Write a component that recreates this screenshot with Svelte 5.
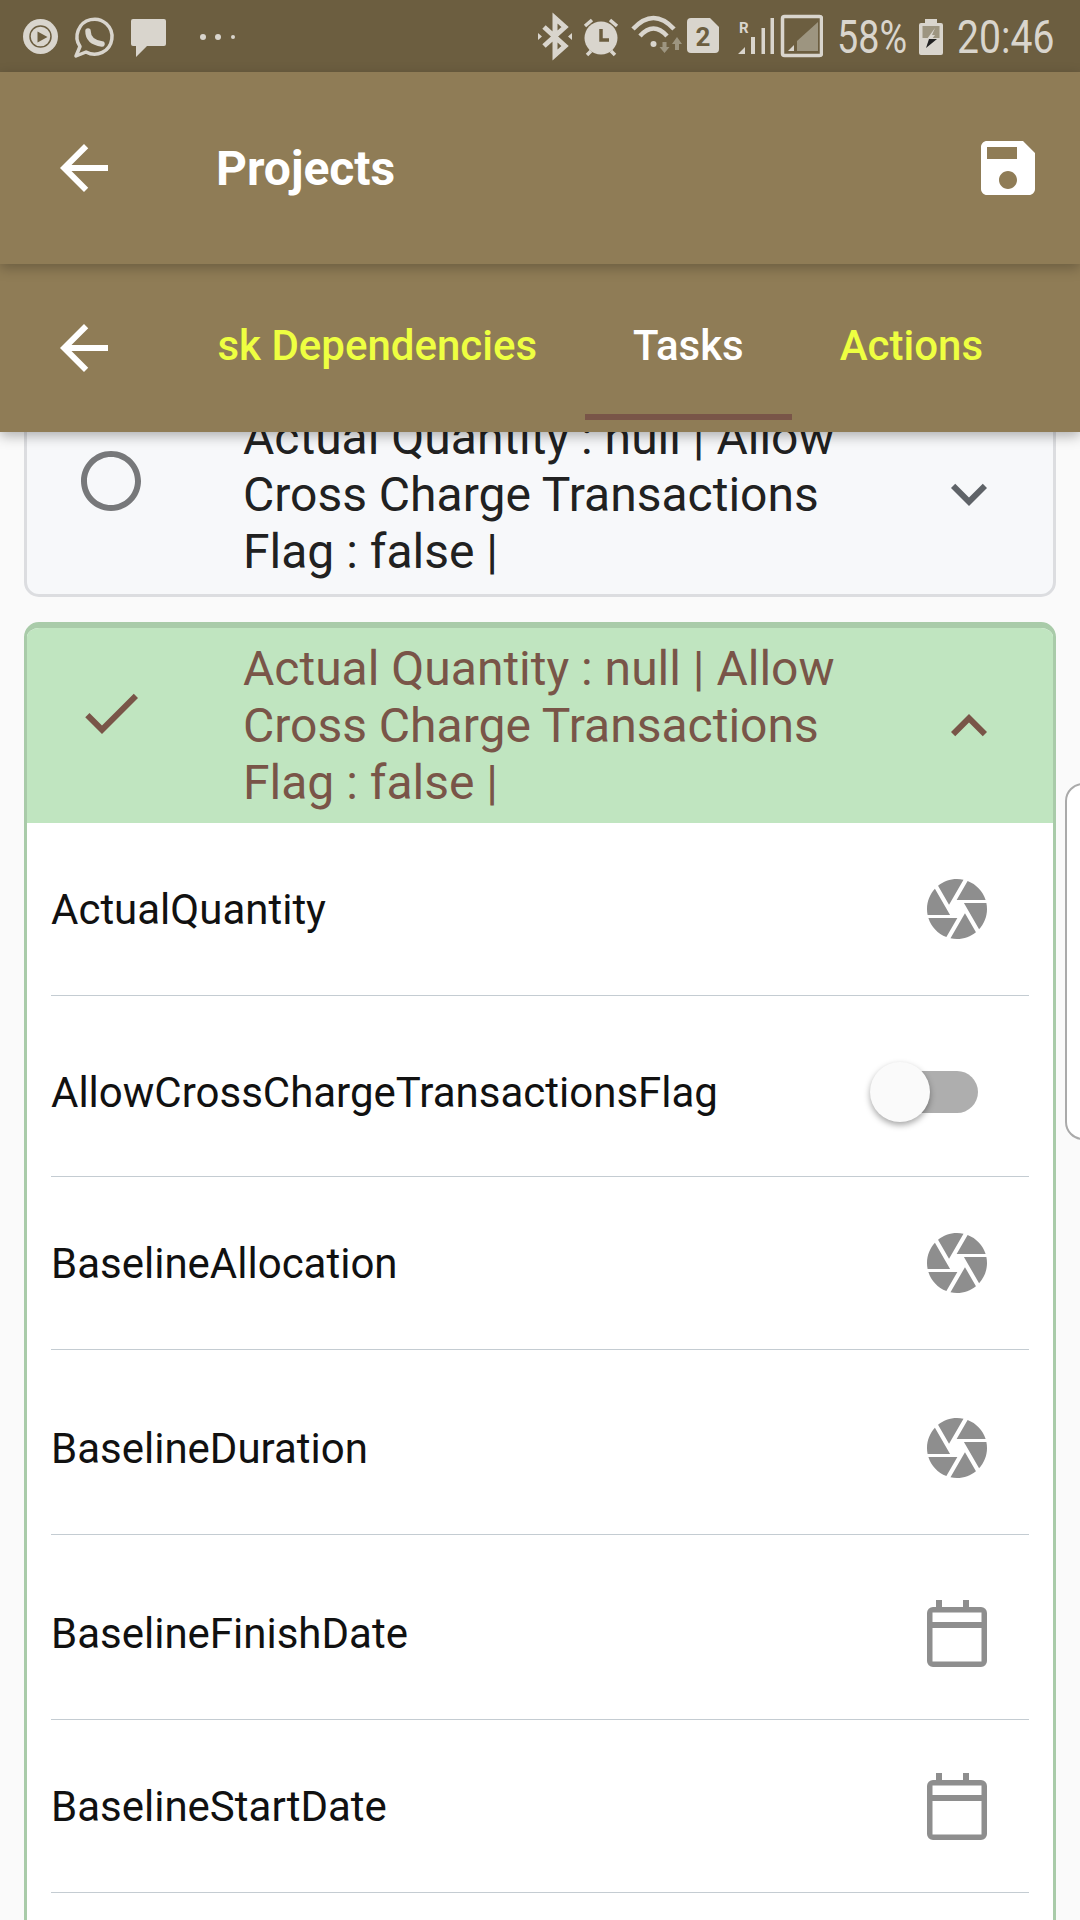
<script>
  const fg = '#d9d5cd';
  const bar = '#6c5e40';
  const dim = '#9d9580';

  const fields = [
    { name: 'ActualQuantity', h: 173, kind: 'camera' },
    { name: 'AllowCrossChargeTransactionsFlag', h: 181, kind: 'toggle', low: true },
    { name: 'BaselineAllocation', h: 173, kind: 'camera' },
    { name: 'BaselineDuration', h: 185, kind: 'camera', low: true },
    { name: 'BaselineFinishDate', h: 185, kind: 'date', low: true },
    { name: 'BaselineStartDate', h: 173, kind: 'date' }
  ];

  const back = 'M20 11H7.83l5.59-5.59L12 4l-8 8 8 8 1.41-1.41L7.83 13H20v-2z';
  const summary = 'Actual Quantity : null | Allow Cross Charge Transactions Flag : false |';
</script>

<div class="screen">
  <header class="top">
    <div class="status">
      <svg class="left-icons" width="212" height="72" viewBox="0 0 212 72">
        <circle cx="17.5" cy="36.5" r="17.5" fill={fg} />
        <circle cx="17.5" cy="36.5" r="10.5" fill="none" stroke={bar} stroke-width="1.5" />
        <path d="M14.5 31.5l10 5.5-10 5.5z" fill={bar} />
        <path d="M53 56L57 46.5A17.5 17.5 0 1 1 63 52Z" fill="none" stroke={fg} stroke-width="3.5" stroke-linejoin="round" />
        <path d="M65 31Q65 42 79 44" fill="none" stroke={fg} stroke-width="5.5" stroke-linecap="round" />
        <path d="M110 19h31a2 2 0 0 1 2 2v23a2 2 0 0 1-2 2h-17l-11 11v-11h-3a2 2 0 0 1-2-2v-23a2 2 0 0 1 2-2z" fill={fg} />
        <circle cx="180" cy="37" r="3" fill={fg} />
        <circle cx="195" cy="37" r="3" fill={fg} />
        <circle cx="210" cy="37" r="2" fill={fg} />
      </svg>

      <div class="right">
        <svg width="285" height="72" viewBox="0 0 285 72">
          <path d="M6 27L27 46L17 55V18L27 27L6 46" fill="none" stroke={fg} stroke-width="5" />
          <path d="M0 33l4 3.500-4 3.500zM34 33l-4 3.500 4 3.500z" fill={fg} />

          <circle cx="63" cy="38" r="16.500" fill={fg} />
          <path d="M63 29V40H71" fill="none" stroke={bar} stroke-width="3.500" />
          <path d="M47 26L54 20M72 20L79 26M49 55L53 51M77 55L73 51" stroke={fg} stroke-width="3.500" />

          <path d="M95 29Q115.500 7 136 29M102 36Q115.500 21 129 36" fill="none" stroke={fg} stroke-width="4.500" />
          <circle cx="115.500" cy="44" r="3" fill={fg} />
          <path d="M124.500 42h4v5h3l-5 6-5-6h3zM137 50h4v-6h3l-5-7-5 7h3z" fill={dim} />

          <path d="M153 18H172L181 27V49a4 4 0 0 1-4 4H153a4 4 0 0 1-4-4V22a4 4 0 0 1 4-4z" fill={fg} />
          <text x="165" y="46" class="sim" fill={bar}>2</text>

          <text x="201" y="33" class="roam" fill={fg}>R</text>
          <path d="M200 54l7-7v7zM213 37h4v17h-4zM223.500 28h3.500v26h-3.500zM232.500 18h3.500v36h-3.500z" fill={fg} />

          <rect x="244.500" y="16.500" width="39" height="39" rx="2" fill="none" stroke={fg} stroke-width="3.500" />
          <path d="M259 51V41L280 22V51z" fill={dim} />
          <path d="M250 51l6-6v6z" fill={fg} />
        </svg>
        <span class="clock pct"><span>58%</span></span>
        <svg width="24" height="72" viewBox="0 0 24 72">
          <path d="M6 19h12v4h4a2 2 0 0 1 2 2v28a2 2 0 0 1-2 2H2a2 2 0 0 1-2-2V25a2 2 0 0 1 2-2h4z" fill={fg} />
          <rect x="3.500" y="26" width="17" height="12" fill={dim} />
          <path d="M16 28l-8 11h5l3-4h-3z" fill={fg} />
          <path d="M8 39h10L7 48l3-9z" fill="#222" />
        </svg>
        <span class="clock time"><span>20:46</span></span>
      </div>
    </div>

    <div class="appbar">
      <svg class="arrow" viewBox="0 0 24 24" fill="#fff"><path d={back} /></svg>
      <h1>Projects</h1>
      <svg class="save" viewBox="0 0 24 24" fill="#fff">
        <path d="M17 3H5c-1.110 0-2 .9-2 2v14c0 1.100.89 2 2 2h14c1.100 0 2-.9 2-2V7l-4-4zm-5 16c-1.660 0-3-1.340-3-3s1.340-3 3-3 3 1.340 3 3-1.340 3-3 3zm3-10H5V5h10v4z" />
      </svg>
    </div>

    <div class="tabbar">
      <svg class="arrow" viewBox="0 0 24 24" fill="#fff"><path d={back} /></svg>
      <nav class="tabs">
        <span class="tab">Task Dependencies</span>
        <span class="tab active">Tasks</span>
        <span class="tab">Actions</span>
      </nav>
    </div>
  </header>

  <main class="content">
    <section class="card closed">
      <div class="head">
        <svg class="lead" viewBox="0 0 24 24" fill="#77787a">
          <path d="M12 2C6.480 2 2 6.480 2 12s4.480 10 10 10 10-4.480 10-10S17.520 2 12 2zm0 18c-4.420 0-8-3.580-8-8s3.580-8 8-8 8 3.580 8 8-3.580 8-8 8z" />
        </svg>
        <p>{summary}</p>
        <svg class="chev" viewBox="0 0 24 24" fill="#5f6368"><path d="M16.590 8.590L12 13.170 7.410 8.590 6 10l6 6 6-6z" /></svg>
      </div>
    </section>

    <section class="card open">
      <div class="head">
        <svg class="lead" viewBox="0 0 24 24" fill="#795548"><path d="M9 16.170L4.830 12l-1.420 1.410L9 19 21 7l-1.410-1.410z" /></svg>
        <p>{summary}</p>
        <svg class="chev" viewBox="0 0 24 24" fill="#795548"><path d="M12 8l-6 6 1.410 1.410L12 10.830l4.590 4.580L18 14z" /></svg>
      </div>

      <div class="fields">
        {#each fields as f}
          <div class="field" class:low={f.low} style="height: {f.h}px">
            <span>{f.name}</span>
            {#if f.kind === 'camera'}
              <svg class="camera" viewBox="0 0 24 24" fill="#8e8e8e">
                <path d="M9.400 10.500l4.770-8.260C13.470 2.090 12.750 2 12 2c-2.400 0-4.600.85-6.320 2.250l3.660 6.350.06-.1zM21.540 9c-.92-2.920-3.150-5.260-6-6.340L11.880 9h9.660zm.26 1h-7.490l.29.5 4.760 8.250C21 16.970 22 14.610 22 12c0-.69-.07-1.350-.2-2zM8.540 12l-3.900-6.750C3.010 7.030 2 9.390 2 12c0 .69.07 1.350.2 2h7.490l-1.150-2zm-6.080 3c.92 2.920 3.150 5.260 6 6.340L12.120 15H2.460zm11.270 0l-3.900 6.760c.7.15 1.420.24 2.170.24 2.400 0 4.600-.85 6.320-2.250l-3.660-6.350-.93 1.600z" />
              </svg>
            {:else if f.kind === 'toggle'}
              <div class="toggle"><i></i></div>
            {:else}
              <svg class="date" viewBox="0 0 60 67" fill="#8e8e8e">
                <path fill-rule="evenodd" d="M9 0h6v7h21V0h6v7h12a6 6 0 0 1 6 6v48a6 6 0 0 1-6 6H6a6 6 0 0 1-6-6V13a6 6 0 0 1 6-6h3zM5.500 12.500V22h49v-9.500zM5.500 28v33.500h49V28z" />
              </svg>
            {/if}
          </div>
        {/each}
      </div>
    </section>

    <div class="peek"></div>
  </main>
</div>

<style>
  :global(body) {
    margin: 0;
    background: #fafafa;
  }

  .screen {
    width: 1080px;
    height: 1920px;
    display: flex;
    flex-direction: column;
    overflow: hidden;
    font-family: Roboto, sans-serif;
  }

  .top {
    position: relative;
    z-index: 2;
    flex: none;
    box-shadow: 0 4px 12px rgba(0, 0, 0, 0.3);
  }

  .status {
    height: 72px;
    background: #6c5e40;
    display: flex;
    justify-content: space-between;
    padding: 0 28px 0 23px;
    box-sizing: border-box;
  }

  .right {
    display: flex;
    align-items: center;
    gap: 14px;
  }

  .sim {
    font: 700 26px Roboto, sans-serif;
    text-anchor: middle;
  }

  .roam {
    font: 700 15px Roboto, sans-serif;
  }

  .clock {
    display: block;
    height: 72px;
    line-height: 74px;
    font-size: 46px;
    color: #d9d5cd;
  }

  .clock span {
    display: inline-block;
    transform-origin: left center;
    white-space: nowrap;
  }

  .pct {
    width: 68px;
  }

  .pct span {
    transform: scaleX(0.82);
  }

  .time {
    width: 95px;
  }

  .time span {
    transform: scaleX(0.85);
  }

  .appbar,
  .tabbar {
    background: #8f7c56;
    display: flex;
    align-items: center;
    padding-left: 48px;
  }

  .appbar {
    position: relative;
    z-index: 1;
    height: 192px;
    box-shadow: 0 4px 12px rgba(0, 0, 0, 0.25);
  }

  .tabbar {
    height: 168px;
  }

  .arrow,
  .save {
    width: 72px;
    height: 72px;
    flex: none;
  }

  h1 {
    margin: 0 0 0 96px;
    flex: 1;
    font-size: 48px;
    font-weight: 700;
    color: #fff;
  }

  .save {
    margin-right: 36px;
  }

  .tabs {
    flex: 1;
    min-width: 0;
    align-self: stretch;
    margin-left: 96px;
    padding-right: 49px;
    display: flex;
    justify-content: flex-end;
    overflow: hidden;
  }

  .tab {
    position: relative;
    flex: none;
    padding: 0 48px 5px;
    display: flex;
    align-items: center;
    white-space: nowrap;
    font-size: 42px;
    font-weight: 500;
    color: #eeff41;
  }

  .tab.active {
    color: #fff;
  }

  .tab.active::after {
    content: '';
    position: absolute;
    left: 0;
    right: 0;
    bottom: 12px;
    height: 6px;
    background: #795548;
  }

  .content {
    position: relative;
    flex: 1;
    min-height: 0;
    overflow: hidden;
    padding: 0 24px;
  }

  .card {
    border: 3px solid #dcdde0;
    border-radius: 15px;
    overflow: hidden;
  }

  .closed {
    margin-top: -41px;
    background: #f7f8fa;
    color: #212121;
  }

  .open {
    margin-top: 25px;
    height: 1400px;
    background: #fff;
    border-color: #a9cba9;
    border-top-width: 6px;
    color: #795548;
  }

  .head {
    height: 195px;
    padding: 0 48px;
    display: flex;
    align-items: center;
  }

  .closed .head {
    height: 200px;
  }

  .open .head {
    background: #c0e5c0;
  }

  .head p {
    flex: 1;
    margin: 0 50px 0 96px;
    font-size: 48px;
    line-height: 57px;
  }

  .lead,
  .chev {
    flex: none;
    width: 72px;
    height: 72px;
  }

  .lead {
    margin-top: -26px;
  }

  .fields {
    padding: 0 24px;
  }

  .field {
    box-sizing: border-box;
    display: flex;
    align-items: center;
    justify-content: space-between;
    border-bottom: 1px solid #c4ccd2;
    font-size: 42px;
    color: #111;
  }

  .field.low {
    padding-top: 12px;
  }

  .camera {
    width: 72px;
    height: 72px;
    margin-right: 36px;
  }

  .date {
    width: 60px;
    height: 67px;
    margin-right: 42px;
  }

  .toggle {
    position: relative;
    width: 99px;
    height: 42px;
    margin-right: 51px;
    background: #aeaeae;
    border-radius: 21px;
  }

  .toggle i {
    position: absolute;
    left: -9px;
    top: -9px;
    width: 60px;
    height: 60px;
    border-radius: 50%;
    background: #fafafa;
    box-shadow: 0 3px 6px rgba(0, 0, 0, 0.35);
  }

  .peek {
    position: absolute;
    left: 1065px;
    top: 351px;
    width: 60px;
    height: 357px;
    box-sizing: border-box;
    border: 2px solid #aaa;
    border-radius: 18px;
    background: #fff;
  }
</style>
